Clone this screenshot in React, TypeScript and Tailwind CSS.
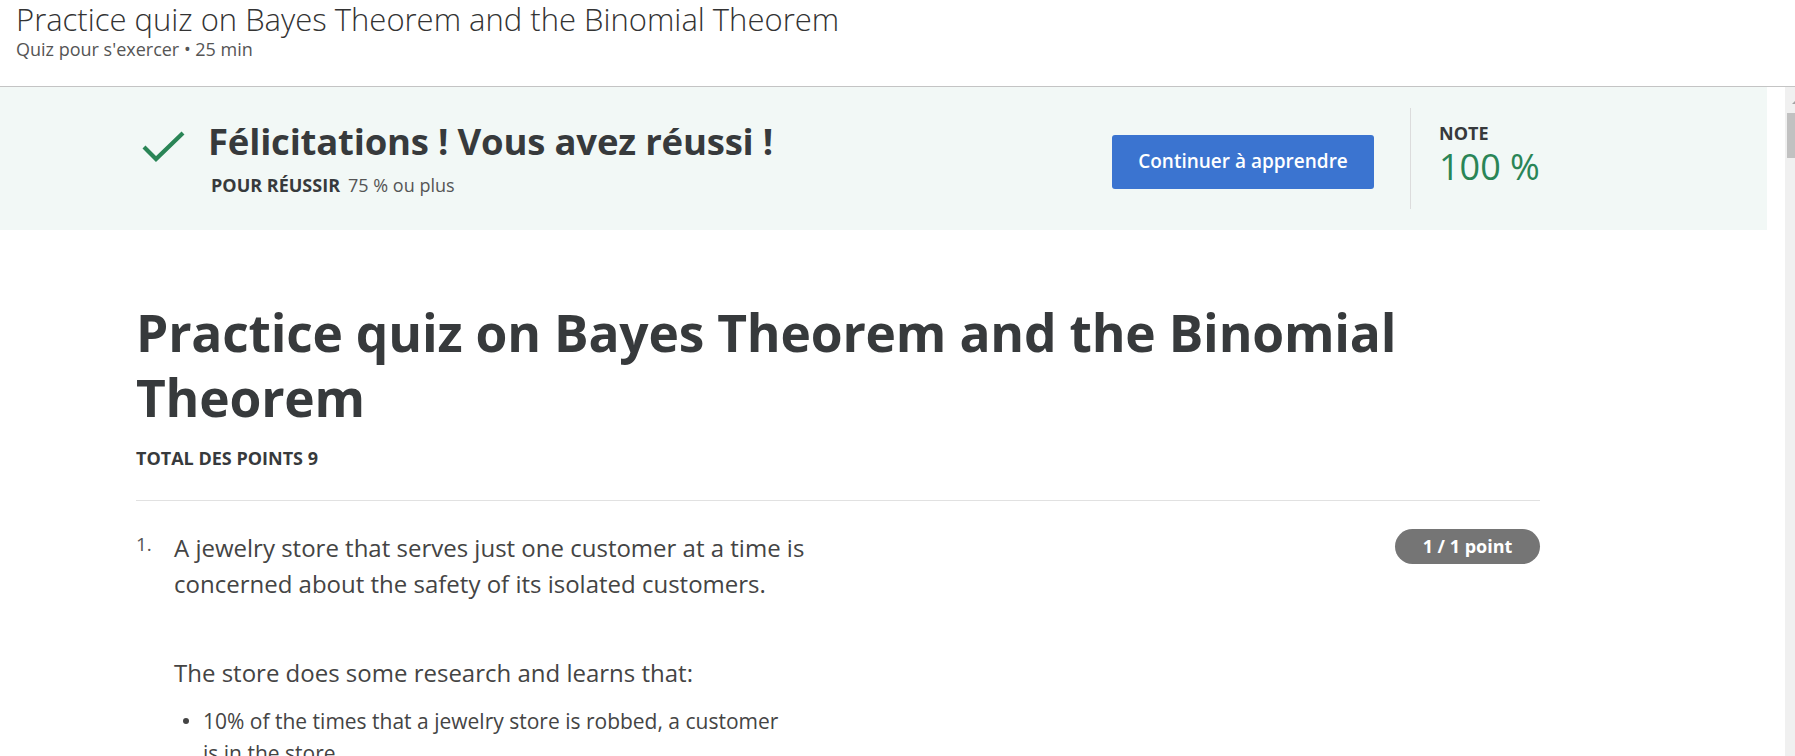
const font = { fontFamily: '"Open Sans", "Noto Sans", sans-serif' };

function Scrollbar() {
  return (
    <div className="w-[10px] shrink-0 bg-[#f0f0f0] flex flex-col items-end">
      <div className="h-[26px] w-full flex items-start justify-end pt-[14px]">
        <div className="w-0 h-0 border-l-[3px] border-l-transparent border-b-[3px] border-b-[#a3a3a3]" />
      </div>
      <div className="w-[8px] h-[45px] bg-[#c1c1c1]" />
    </div>
  );
}

export default function App() {
  return (
    <div className="w-[1795px] h-[756px] overflow-hidden bg-white text-[#373a3c] flex flex-col" style={font}>
      {/* top bar */}
      <header className="h-[87px] shrink-0 border-b border-[#c4c4c4] px-4">
        <h1 className="text-[31px] leading-[40px] font-light text-[#333] -mt-[1px]">
          Practice quiz on Bayes Theorem and the Binomial Theorem
        </h1>
        <p className="-mt-[2px] text-[18px] leading-[24px] text-[#555]">Quiz pour s'exercer • 25 min</p>
      </header>

      <div className="flex flex-1 min-h-0">
        <main className="flex-1 min-w-0">
          {/* result banner */}
          <section className="h-[143px] mr-[18px] bg-[#f2f8f6]">
            <div className="ml-[136px] w-[1404px] h-full flex items-center justify-between">
              <div className="flex items-start mt-[2px]">
                <svg width="44" height="34" viewBox="0 0 44 34" className="ml-[6px] mt-[7px]">
                  <polyline points="2,17 14,29 41,3" fill="none" stroke="#2a8556" strokeWidth="4.2" />
                </svg>
                <div className="ml-[22px] -mt-[4px]">
                  <h2 className="text-[36.5px] leading-[44px] font-bold tracking-[-0.2px]">
                    Félicitations ! Vous avez réussi !
                  </h2>
                  <p className="mt-[11px] ml-[3px] text-[18px] leading-[22px]">
                    <span className="font-bold uppercase">Pour réussir</span>
                    <span className="ml-[8px] text-[#555]">75 % ou plus</span>
                  </p>
                </div>
              </div>
              <div className="flex items-center h-full">
                <button className="mt-[6px] w-[262px] h-[54px] rounded-[3px] bg-[#3b74d0] text-white text-[19px] font-semibold">
                  Continuer à apprendre
                </button>
                <div className="ml-[36px] w-px h-[101px] bg-[#dcdcdc]" />
                <div className="ml-[28px] w-[101px] pb-[8px]">
                  <div className="text-[18px] leading-[24px] font-bold">NOTE</div>
                  <div className="text-[36px] leading-[44px] text-[#2a8556] whitespace-nowrap">100 %</div>
                </div>
              </div>
            </div>
          </section>

          {/* quiz body */}
          <div className="ml-[136px] w-[1404px] pt-[70px]">
            <h1 className="text-[51.5px] leading-[65px] font-bold tracking-[-0.2px]">
              Practice quiz on Bayes Theorem and the Binomial Theorem
            </h1>
            <div className="mt-[17px] text-[18px] leading-[22px] font-bold">TOTAL DES POINTS 9</div>
            <div className="mt-[31px] h-px bg-[#e1e1e1]" />

            <div className="flex pt-[29px]">
              <div className="w-[38px] text-[19px] leading-[28px] text-[#555]">1.</div>
              <div className="flex-1 text-[24px] leading-[36px] text-[#444]">
                <p className="w-[660px]">
                  A jewelry store that serves just one customer at a time is concerned about the safety of its isolated customers.
                </p>
                <p className="mt-[53px]">The store does some research and learns that:</p>
                <ul className="mt-[14px] w-[620px] text-[21px] leading-[32px]">
                  <li className="flex items-start">
                    <span className="mt-[13px] ml-[9px] mr-[14px] w-[6px] h-[6px] rounded-full bg-[#444] shrink-0" />
                    <span>10% of the times that a jewelry store is robbed, a customer is in the store.</span>
                  </li>
                </ul>
              </div>
              <div className="shrink-0 self-start -mt-[1px] h-[35px] w-[145px] rounded-full bg-[#757575] text-white text-[18px] font-bold flex items-center justify-center">
                1 / 1 point
              </div>
            </div>
          </div>
        </main>
        <Scrollbar />
      </div>
    </div>
  );
}
